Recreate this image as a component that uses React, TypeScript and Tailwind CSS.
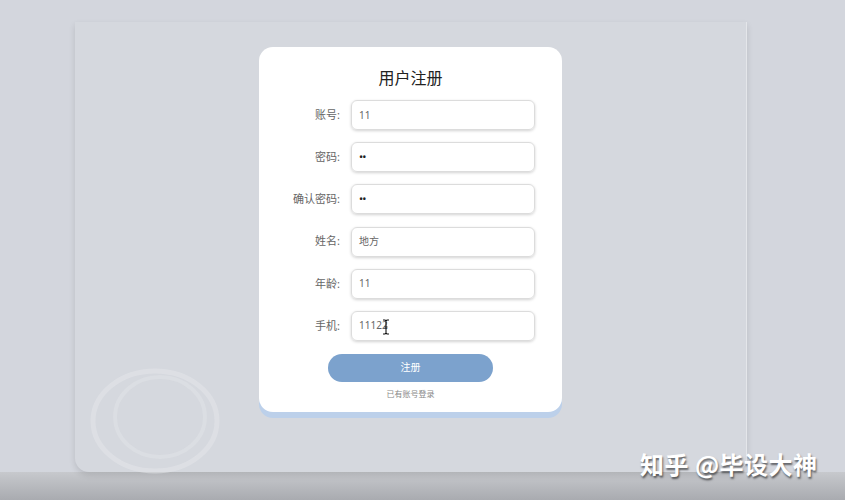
import React from 'react';

const fields = [
  { label: '账号:', value: '11', kind: 'text' },
  { label: '密码:', value: '••', kind: 'dots' },
  { label: '确认密码:', value: '••', kind: 'dots' },
  { label: '姓名:', value: '地方', kind: 'text' },
  { label: '年龄:', value: '11', kind: 'text' },
  { label: '手机:', value: '11122', kind: 'cursor' },
];

function IBeam() {
  return (
    <svg className="absolute left-[30px] top-[7px]" width="8" height="16" viewBox="0 0 8 16">
      <path d="M1 1h2l1 1 1-1h2M4 2v12M1 15h2l1-1 1 1h2M2.5 8h3" stroke="#111" strokeWidth="1.1" fill="none" />
    </svg>
  );
}

export default function App() {
  return (
    <div
      className="relative w-[845px] h-[500px] overflow-hidden flex flex-col bg-[#d3d6dd]"
      style={{ fontFamily: '"Noto Sans", "Noto Sans CJK SC", sans-serif' }}
    >
      {/* Panel */}
      <div className="mt-[22px] ml-[75px] w-[672px] h-[450px] rounded-b-[14px] bg-[#d5d8de] shadow-[0_3px_6px_rgba(0,0,0,0.12)] border-r border-r-[#e4e6ea] relative flex flex-col">
        {/* faint circles */}
        <svg className="absolute left-[5px] top-[345px]" width="150" height="110" viewBox="0 0 150 110">
          <ellipse cx="75" cy="54" rx="62" ry="50" stroke="#e3e5e9" strokeWidth="5" fill="none" opacity="0.55" />
          <ellipse cx="80" cy="50" rx="45" ry="40" stroke="#e1e3e7" strokeWidth="4" fill="none" opacity="0.5" />
        </svg>

        {/* Card */}
        <div className="mt-[25px] ml-[184px] w-[303px] h-[365px] rounded-[14px] bg-white shadow-[0_6px_0_#bcd0ea] flex flex-col items-center relative">
          <div className="mt-[20px] text-[16px] leading-[22px] text-[#222]">用户注册</div>
          <div className="mt-[11px] w-full flex flex-col gap-[12.2px]">
            {fields.map((f) => (
              <div key={f.label} className="flex items-center h-[30px]">
                <div className="w-[81px] text-right text-[11px] text-[#666]">{f.label}</div>
                <div className="relative ml-[11px] w-[184px] h-[30px] rounded-[6px] border border-[#dcdcdc] shadow-[0_1px_3px_rgba(0,0,0,0.18)] flex items-center pl-[7px]">
                  {f.kind === 'dots' ? (
                    <span className="text-[11px] text-[#222] tracking-[-1px]">{f.value}</span>
                  ) : (
                    <span className="text-[10px] text-[#666]">{f.value}</span>
                  )}
                  {f.kind === 'cursor' && <IBeam />}
                </div>
              </div>
            ))}
          </div>
          <button className="mt-[13px] w-[165px] h-[28px] rounded-full bg-[#7ca2cd] text-white text-[10px]">
            注册
          </button>
          <div className="mt-[6px] text-[8px] text-[#888]">已有账号登录</div>
        </div>
      </div>

      {/* Bottom band */}
      <div className="flex-1 bg-gradient-to-b from-[#c7c9cd] to-[#a9abb0]" />

      {/* Watermark */}
      <div
        className="absolute left-[640px] top-[448px] text-[24px] leading-[32px] font-bold text-white tracking-[0.5px] [text-shadow:1px_2px_2px_rgba(0,0,0,0.55)]"
        style={{ fontFamily: '"Noto Sans CJK SC", sans-serif' }}
      >
        知乎 @毕设大神
      </div>
    </div>
  );
}
